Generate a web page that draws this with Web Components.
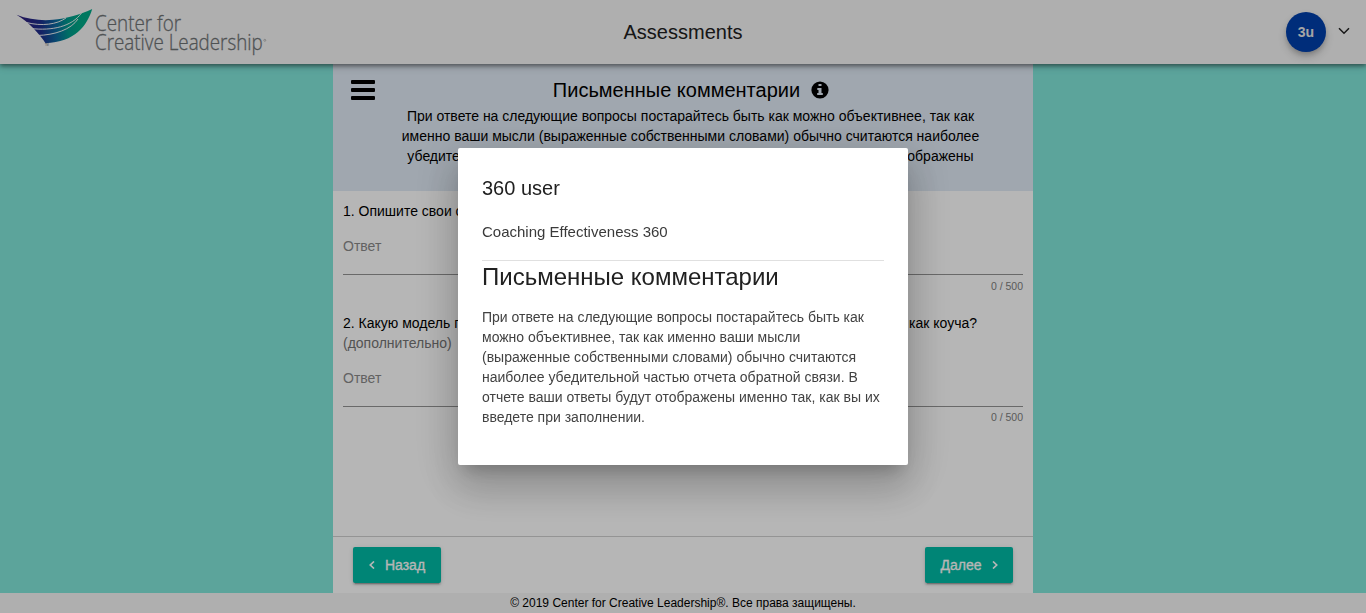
<!DOCTYPE html>
<html lang="ru">
<head>
<meta charset="utf-8">
<title>Assessments</title>
<style>
html,body{margin:0;height:100%;overflow:hidden}
body{font:14px/20px "Liberation Sans",Arial,sans-serif;color:#000}
</style>
</head>
<body>
<assessment-app></assessment-app>
<script>
const define=(name,html)=>customElements.define(name,class extends HTMLElement{
  constructor(){
    super();
    const t=document.createElement('template');
    t.innerHTML=html;
    this.attachShadow({mode:'open'}).append(t.content.cloneNode(true));
  }
});

define('ccl-logo',`
<style>:host{display:block;width:270px;height:64px}svg{display:block;overflow:visible}</style>
<svg width="270" height="64" viewBox="0 0 270 64">
  <defs><linearGradient id="g" gradientUnits="userSpaceOnUse" x1="24" y1="18" x2="78" y2="14">
    <stop offset="0" stop-color="#2d217f"/><stop offset=".3" stop-color="#1d2f8c"/><stop offset=".58" stop-color="#0b6a9e"/><stop offset=".8" stop-color="#009a8d"/><stop offset="1" stop-color="#00a887"/>
  </linearGradient></defs>
  <path fill="url(#g)" d="M16.5 14.8C28 19.6 42 20.8 53 19.8C66 18.8 81 14.2 92.2 9C87 26 75 42 45.5 43.2C40 35 29 22 16.5 14.8Z"/>
  <g fill="none" stroke="#f5f5f5" stroke-width=".95">
    <path d="M26 22.4C42 26.6 57 24.4 66 18"/>
    <path d="M31 28.5C52 31 72 26.5 81.5 13"/>
    <path d="M37 35.5C55 35 71 29.5 78 19"/>
  </g>
  <text x="45" y="46" font-size="2.6" fill="#666">TM</text>
  <g transform="scale(.82 1)" font-family="Open Sans,sans-serif" font-weight="300" font-size="21.6" fill="#6f7375" stroke="#6f7375" stroke-width=".3">
    <text x="115.9" y="31" textLength="105" lengthAdjust="spacingAndGlyphs">Center for</text>
    <text x="115.9" y="50.5" textLength="204.5" lengthAdjust="spacingAndGlyphs">Creative Leadership</text>
  </g>
  <circle cx="264.8" cy="40.3" r="1" fill="none" stroke="#888" stroke-width=".5"/>
</svg>`);

define('app-header',`
<style>
:host{display:grid;grid-template-columns:1fr auto 1fr;align-items:center;height:64px;background:#f5f5f5;box-shadow:0 2px 4px rgba(0,0,0,.4),0 3px 8px rgba(0,0,0,.16);position:relative;z-index:1}
.title{font-size:20px;color:#212121}
.user{display:flex;justify-content:flex-end;align-items:center;gap:12px;padding-right:16px}
.avatar{width:40px;height:40px;border-radius:50%;background:#003fac;color:#e8e8e8;display:grid;place-items:center;font-weight:bold;box-shadow:0 3px 5px -1px rgba(0,0,0,.2),0 5px 9px rgba(0,0,0,.16)}
svg{display:block;margin-top:-3px}
</style>
<ccl-logo></ccl-logo><div class="title">Assessments</div>
<div class="user"><div class="avatar">3u</div><svg width="12" height="8" viewBox="0 0 12 8"><path d="M1 1.2L6 6.2L11 1.2" fill="none" stroke="#212121" stroke-width="1.5"/></svg></div>`);

define('section-intro',`
<style>
:host{display:grid;grid-template-columns:24px 600px;column-gap:16px;padding:14px 0 0 18px;background:#e0eaf5;box-sizing:border-box;height:127px}
.menu{margin-top:2px}
svg{display:block}
.copy{text-align:center;margin-left:-1px}
h1{display:flex;justify-content:center;align-items:center;gap:11px;margin:0 0 4px;font-size:20px;line-height:24px;font-weight:400;padding-left:1px}
p{margin:0}
</style>
<svg class="menu" width="24" height="20"><g><rect width="24" height="4" rx="1"/><rect y="8" width="24" height="4" rx="1"/><rect y="16" width="24" height="4" rx="1"/></g></svg>
<div class="copy"><h1><span>Письменные комментарии</span><svg width="18" height="18" viewBox="0 0 18 18"><circle cx="9" cy="9" r="8.6"/><path fill="#e0eaf5" d="M7.5 2.9h3v2.2h-3zM6.3 7h4.2v5h1.3v2H6.2v-2h1.3V9H6.3z"/></svg></h1>
<p>При ответе на следующие вопросы постарайтесь быть как можно объективнее, так как<br>именно ваши мысли (выраженные собственными словами) обычно считаются наиболее<br>убедительной частью отчета обратной связи. В отчете ваши ответы будут отображены</p></div>`);

define('comment-question',`
<style>
:host{display:block;height:112px}
.q{display:flex;justify-content:space-between;width:634px}
.hint{color:#757575;min-height:0}
.field{height:38px;padding-top:15px;border-bottom:1px solid #949494;color:#8a8a8a}
.count{text-align:right;font-size:10.5px;line-height:12px;padding-top:5px;color:#808080}
:host(.optional) .count{margin-top:-1px}
</style>
<div class="q"><slot name="start"></slot><slot name="end"></slot></div>
<div class="hint"><slot name="hint"></slot></div>
<div class="field">Ответ</div><div class="count">0 / 500</div>`);

define('nav-button',`
<style>
:host{display:flex;align-items:center;justify-content:center;width:88px;height:36px;border-radius:2px;background:#00bba6;color:#fff;box-shadow:0 3px 1px -2px rgba(0,0,0,.2),0 2px 2px rgba(0,0,0,.14),0 1px 5px rgba(0,0,0,.12);gap:10px;-webkit-text-stroke:.3px #fff}
</style><slot></slot>`);

define('assessment-panel',`
<style>
:host{display:flex;flex-direction:column;width:700px;background:#fff}
.list{flex:1;padding:10px 10px 0}
nav{height:56px;border-top:1px solid #d0d0d0;display:flex;justify-content:space-between;align-items:center;padding:0 20px}
svg{display:block}
</style>
<section-intro></section-intro>
<div class="list">
<comment-question><span slot="start">1. Опишите свои сильные стороны в качестве коуча.</span></comment-question>
<comment-question class="optional"><span slot="start">2. Какую модель поведения вам следует развивать в роли</span><span slot="end">как коуча?</span><span slot="hint">(дополнительно)</span></comment-question>
</div>
<nav>
<nav-button><svg width="6" height="8" viewBox="0 0 6 8"><path d="M5 .5L1.3 4L5 7.5" fill="none" stroke="#fff" stroke-width="1.7"/></svg><span>Назад</span></nav-button>
<nav-button><span>Далее</span><svg width="6" height="8" viewBox="0 0 6 8"><path d="M1 .5L4.7 4L1 7.5" fill="none" stroke="#fff" stroke-width="1.7"/></svg></nav-button>
</nav>`);

define('info-dialog',`
<style>
:host{display:block;box-sizing:border-box;width:450px;height:317px;padding:24px;background:#fff;border-radius:2px;color:#212121;box-shadow:0 11px 15px -7px rgba(0,0,0,.2),0 24px 38px 3px rgba(0,0,0,.14),0 9px 46px 8px rgba(0,0,0,.12)}
h2{margin:0;font-size:20px;line-height:32px;font-weight:400}
.tool{margin-top:16px;font-size:15px;line-height:24px;color:#3a3a3a}
h3{margin:16px 0 0;width:402px;border-top:1px solid #e0e0e0;font-size:24px;line-height:32px;font-weight:400}
p{margin:14px 0 0;color:#424242}
</style>
<h2>360 user</h2><div class="tool">Coaching Effectiveness 360</div>
<h3>Письменные комментарии</h3>
<p>При ответе на следующие вопросы постарайтесь быть как<br>можно объективнее, так как именно ваши мысли<br>(выраженные собственными словами) обычно считаются<br>наиболее убедительной частью отчета обратной связи. В<br>отчете ваши ответы будут отображены именно так, как вы их<br>введете при заполнении.</p>`);

define('assessment-app',`
<style>
:host{display:flex;flex-direction:column;height:613px}
main{flex:1;display:flex;justify-content:center;background:#81e6da}
footer{height:20px;background:#f5f5f5;text-align:center;font-size:12px;line-height:20px}
.overlay{position:fixed;inset:0;z-index:5;display:grid;place-items:center;background:rgba(0,0,0,.288)}
</style>
<app-header></app-header>
<main><assessment-panel></assessment-panel></main>
<footer>© 2019 Center for Creative Leadership®. Все права защищены.</footer>
<div class="overlay"><info-dialog></info-dialog></div>`);
</script>
</body>
</html>
